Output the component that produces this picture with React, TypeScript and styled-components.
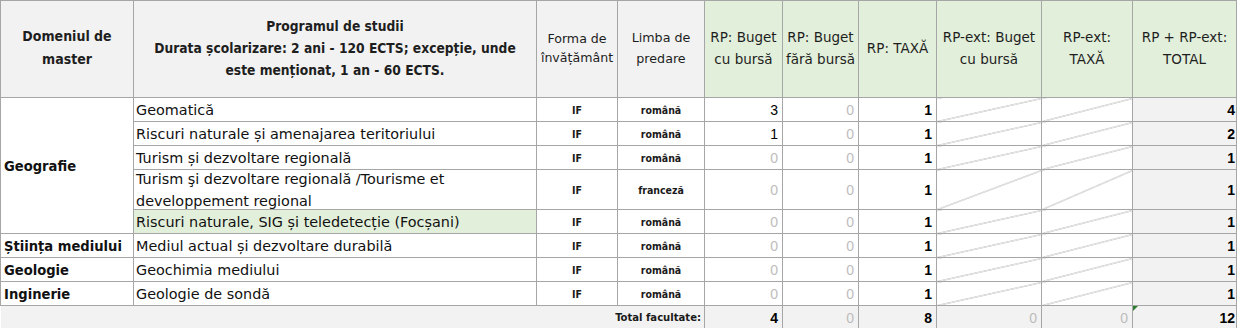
import React from "react";
import styled, { createGlobalStyle } from "styled-components";

const GlobalStyle = createGlobalStyle`
  html, body { margin: 0; padding: 0; background: #ffffff; }
  body { font-family: "DejaVu Sans", sans-serif; color: #151515; }
`;

const LINE = "#a6a6a6";
const GRAY_BG = "#f2f2f2";
const GREEN_BG = "#e2efda";
const BOLD_FONT = `"DejaVu Sans Condensed", "DejaVu Sans", sans-serif`;
const TEXT_FONT = `"DejaVu Sans", sans-serif`;
const NUM_FONT = `"Liberation Sans", Arial, sans-serif`;

const Table = styled.table`
  border-collapse: collapse;
  table-layout: fixed;
  width: 1237px;
  font-family: ${TEXT_FONT};
`;

const HeadRow = styled.tr`
  height: 97px;
`;

const BodyRow = styled.tr<{ $tall?: boolean }>`
  height: ${(p) => (p.$tall ? "40px" : "24px")};
`;

const HeadCell = styled.th<{ $tone: "gray" | "green"; $size: number; $bold?: boolean; $lh: number }>`
  border: 1px solid ${LINE};
  background: ${(p) => (p.$tone === "green" ? GREEN_BG : GRAY_BG)};
  font-family: ${(p) => (p.$bold ? BOLD_FONT : TEXT_FONT)};
  font-size: ${(p) => p.$size}px;
  font-weight: ${(p) => (p.$bold ? 700 : 400)};
  line-height: ${(p) => p.$lh}px;
  text-align: center;
  vertical-align: middle;
  color: #1e1e1e;
  padding: 0 0 3px;
  white-space: nowrap;
`;

const DomainCell = styled.td`
  border: 1px solid ${LINE};
  font-family: ${BOLD_FONT};
  font-size: 14.6px;
  font-weight: 700;
  padding: 0 3px;
  vertical-align: middle;
  white-space: nowrap;
  color: #111;
`;

const ProgramCell = styled.td<{ $highlight?: boolean }>`
  border: 1px solid ${LINE};
  background: ${(p) => (p.$highlight ? GREEN_BG : "#ffffff")};
  font-size: 14.4px;
  line-height: 20px;
  padding: 0 2px;
  vertical-align: middle;
  white-space: nowrap;
  color: #111;
`;

const WrappedName = styled.div`
  height: 39px;
  line-height: 22px;
  margin-top: -4px;
`;

const TagCell = styled.td`
  border: 1px solid ${LINE};
  font-family: ${BOLD_FONT};
  font-size: 10.5px;
  font-weight: 700;
  text-align: center;
  vertical-align: middle;
  color: #1a1a1a;
  padding: 0;
`;

const NumCell = styled.td<{ $zero?: boolean; $bold?: boolean; $shade?: boolean; $tight?: boolean }>`
  border: 1px solid ${LINE};
  background: ${(p) => (p.$shade ? GRAY_BG : "transparent")};
  font-family: ${NUM_FONT};
  font-size: 14px;
  font-weight: ${(p) => (p.$bold && !p.$zero ? 700 : 400)};
  color: ${(p) => (p.$zero ? "#bdbdbd" : "#000000")};
  text-align: right;
  vertical-align: middle;
  padding: 0 ${(p) => (p.$tight ? "1px" : "4px")} 0 0;
  position: relative;
`;

const SlashCell = styled.td`
  border: 1px solid ${LINE};
  padding: 0;
  background: linear-gradient(
    to bottom right,
    transparent calc(50% - 0.7px),
    #a9a9a9 50%,
    transparent calc(50% + 0.7px)
  );
`;

const TotalRow = styled.tr`
  height: 24px;
  background: ${GRAY_BG};
`;

const TotalLabel = styled.td`
  border: 1px solid ${LINE};
  border-left: none;
  font-family: ${BOLD_FONT};
  font-size: 11.2px;
  font-weight: 700;
  text-align: right;
  padding: 0 3px 0 0;
  vertical-align: middle;
  color: #1a1a1a;
`;

const Marker = styled.span`
  position: absolute;
  top: 0;
  left: 0;
  width: 0;
  height: 0;
  border-top: 5px solid #2e7d32;
  border-right: 5px solid transparent;
`;

const Col = styled.col<{ $w: number }>`
  width: ${(p) => p.$w}px;
`;

const widths = [133, 403, 81, 87, 78, 76, 78, 105, 91, 104];

type Program = {
  name: React.ReactNode;
  lang: string;
  cu: number;
  fara: number;
  taxa: number;
  total: number;
  tall?: boolean;
  highlight?: boolean;
};

type Domain = { name: string; programs: Program[] };

const domains: Domain[] = [
  {
    name: "Geografie",
    programs: [
      { name: "Geomatică", lang: "română", cu: 3, fara: 0, taxa: 1, total: 4 },
      { name: "Riscuri naturale și amenajarea teritoriului", lang: "română", cu: 1, fara: 0, taxa: 1, total: 2 },
      { name: "Turism și dezvoltare regională", lang: "română", cu: 0, fara: 0, taxa: 1, total: 1 },
      {
        name: (
          <WrappedName>
            Turism şi dezvoltare regională /Tourisme et
            <br />
            developpement regional
          </WrappedName>
        ),
        lang: "franceză",
        cu: 0,
        fara: 0,
        taxa: 1,
        total: 1,
        tall: true,
      },
      {
        name: "Riscuri naturale, SIG și teledetecție (Focșani)",
        lang: "română",
        cu: 0,
        fara: 0,
        taxa: 1,
        total: 1,
        highlight: true,
      },
    ],
  },
  {
    name: "Știința mediului",
    programs: [{ name: "Mediul actual și dezvoltare durabilă", lang: "română", cu: 0, fara: 0, taxa: 1, total: 1 }],
  },
  {
    name: "Geologie",
    programs: [{ name: "Geochimia mediului", lang: "română", cu: 0, fara: 0, taxa: 1, total: 1 }],
  },
  {
    name: "Inginerie",
    programs: [{ name: "Geologie de sondă", lang: "română", cu: 0, fara: 0, taxa: 1, total: 1 }],
  },
];

const heads: { text: React.ReactNode; tone: "gray" | "green"; size: number; bold?: boolean; lh: number }[] = [
  { text: <>Domeniul de<br />master</>, tone: "gray", size: 14, bold: true, lh: 23 },
  {
    text: (
      <>
        Programul de studii
        <br />
        Durata școlarizare: 2 ani - 120 ECTS; excepție, unde
        <br />
        este menționat, 1 an - 60 ECTS.
      </>
    ),
    tone: "gray",
    size: 13.7,
    bold: true,
    lh: 22,
  },
  { text: <>Forma de<br />învățământ</>, tone: "gray", size: 12.6, lh: 19 },
  { text: <>Limba de<br />predare</>, tone: "gray", size: 12.7, lh: 21 },
  { text: <>RP: Buget<br />cu bursă</>, tone: "green", size: 13.5, lh: 22 },
  { text: <>RP: Buget<br />fără bursă</>, tone: "green", size: 13.5, lh: 22 },
  { text: <>RP: TAXĂ</>, tone: "green", size: 13.5, lh: 22 },
  { text: <>RP-ext: Buget<br />cu bursă</>, tone: "green", size: 13.5, lh: 22 },
  { text: <>RP-ext:<br />TAXĂ</>, tone: "green", size: 13.5, lh: 22 },
  { text: <>RP + RP-ext:<br />TOTAL</>, tone: "green", size: 13.5, lh: 22 },
];

export default function App() {
  const totals = domains
    .flatMap((d) => d.programs)
    .reduce(
      (acc, p) => ({ cu: acc.cu + p.cu, fara: acc.fara + p.fara, taxa: acc.taxa + p.taxa, total: acc.total + p.total }),
      { cu: 0, fara: 0, taxa: 0, total: 0 }
    );

  return (
    <>
      <GlobalStyle />
      <Table>
        <colgroup>
          {widths.map((w, i) => (
            <Col key={i} $w={w} />
          ))}
        </colgroup>
        <thead>
          <HeadRow>
            {heads.map((h, i) => (
              <HeadCell key={i} $tone={h.tone} $size={h.size} $bold={h.bold} $lh={h.lh}>
                {h.text}
              </HeadCell>
            ))}
          </HeadRow>
        </thead>
        <tbody>
          {domains.map((d) =>
            d.programs.map((p, i) => (
              <BodyRow key={d.name + i} $tall={p.tall}>
                {i === 0 && <DomainCell rowSpan={d.programs.length}>{d.name}</DomainCell>}
                <ProgramCell $highlight={p.highlight}>{p.name}</ProgramCell>
                <TagCell>IF</TagCell>
                <TagCell>{p.lang}</TagCell>
                <NumCell $zero={p.cu === 0}>{p.cu}</NumCell>
                <NumCell $zero={p.fara === 0}>{p.fara}</NumCell>
                <NumCell $zero={p.taxa === 0} $bold>
                  {p.taxa}
                </NumCell>
                <SlashCell />
                <SlashCell />
                <NumCell $bold $shade $tight>
                  {p.total}
                </NumCell>
              </BodyRow>
            ))
          )}
          <TotalRow>
            <TotalLabel colSpan={4}>Total facultate:</TotalLabel>
            <NumCell $bold>{totals.cu}</NumCell>
            <NumCell $zero>{totals.fara}</NumCell>
            <NumCell $bold>{totals.taxa}</NumCell>
            <NumCell $zero>0</NumCell>
            <NumCell $zero>0</NumCell>
            <NumCell $bold $tight>
              <Marker />
              {totals.total}
            </NumCell>
          </TotalRow>
        </tbody>
      </Table>
    </>
  );
}
